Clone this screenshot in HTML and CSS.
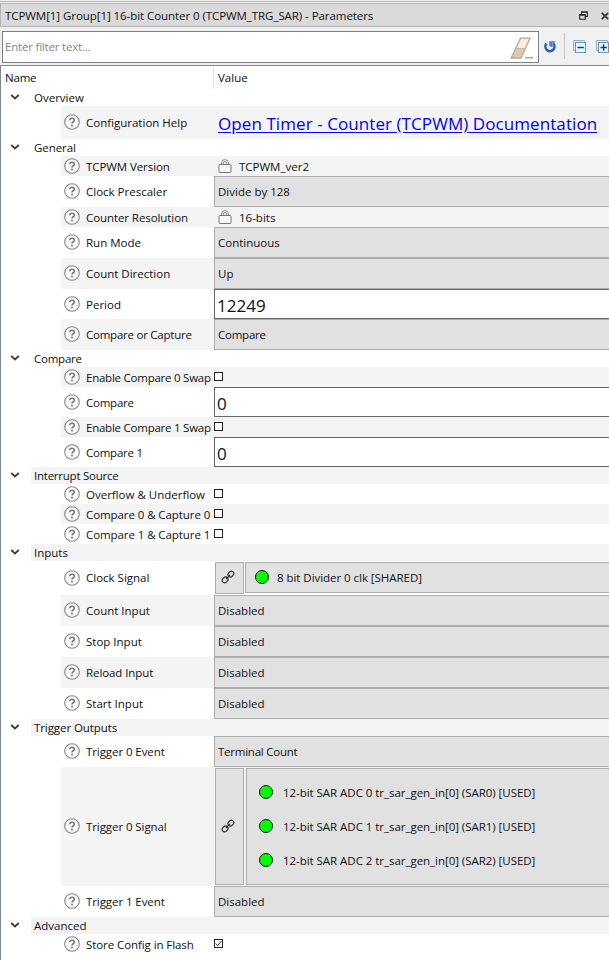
FILE: index.html
```html
<!DOCTYPE html>
<html lang="en">
<head>
<meta charset="utf-8">
<title>Parameters</title>
<link rel="stylesheet" href="styles.css">
</head>
<body>
<svg class="defs" aria-hidden="true">
  <symbol id="help" viewBox="0 0 16 16"><circle cx="8" cy="8" r="7.3" fill="#fff" fill-opacity=".6" stroke="#858585" stroke-width="1.1"/><path d="M5.8 6.2C5.8 3.6 10.3 3.6 10.3 6.2C10.3 7.8 8 7.7 8 9.6" fill="none" stroke="#777" stroke-width="1.6"/><rect x="7.1" y="10.7" width="1.8" height="1.7" fill="#777"/></symbol>
  <symbol id="chev" viewBox="0 0 10 8"><path d="M1.2 2L5 5.5L8.8 2" fill="none" stroke="#404040" stroke-width="1.9"/></symbol>
  <symbol id="lock" viewBox="0 0 14 14"><path d="M3.5 5.5V4A3.5 3.4 0 0 1 10.5 4V5.5M5.3 5.3V4.3A1.7 1.7 0 0 1 8.7 4.3V5.3" fill="none" stroke="#777" stroke-width=".8"/><rect x="1" y="5.5" width="12" height="8" rx=".8" fill="#fafafa" stroke="#666" stroke-width=".9"/></symbol>
  <symbol id="link" viewBox="0 0 14 14"><g fill="none" stroke="#222" stroke-width="1.1" transform="rotate(-45 7 7)"><rect x="-.2" y="4.6" width="6.2" height="4.8" rx="2.4"/><rect x="8" y="4.6" width="6.2" height="4.8" rx="2.4"/><path d="M4 7H10"/></g></symbol>
</svg>
<div class="window">
  <header class="titlebar">
    <span class="title">TCPWM[1] Group[1] 16-bit Counter 0 (TCPWM_TRG_SAR) - Parameters</span>
    <svg class="restore" viewBox="0 0 9 9"><path d="M2.5 3V.7H8.3V5.5H6.5M2.5 1.3H8.3M.7 3.5H6.2V8.3H.7ZM.7 4.1H6.2" fill="none" stroke="#222" stroke-width="1.1"/></svg>
    <svg class="close" viewBox="0 0 8 8"><path d="M.8 .8L7.2 7.2M7.2 .8L.8 7.2" stroke="#333" stroke-width="1.8"/></svg>
  </header>
  <div class="toolbar">
    <div class="filter"><span class="placeholder">Enter filter text...</span>
      <svg class="eraser" viewBox="0 0 23 22"><path d="M10.5 1.2H20L11 21H1.2Z" fill="#f4eee6" stroke="#b5a68f" stroke-width="1.3"/><path d="M6 11.5H14.8L11 20.7H1.5Z" fill="#d8cab6" stroke="#b5a68f" stroke-width=".6"/><path d="M15 20.7H23" stroke="#b5a68f" stroke-width="1.6"/></svg>
    </div>
    <svg class="reset" viewBox="0 0 12 12"><path d="M2.5 2.7A4.5 4.5 0 1 0 9.2 2.5" fill="none" stroke="#2d5fc4" stroke-width="2.6"/><path d="M5.2 .3H11.5L10.4 1.8H8.6V6L5.3 5.2Z" fill="#4b7bd8"/></svg>
    <span class="divider"></span>
    <svg class="tree-btn collapse" viewBox="0 0 14 14"><path d="M.5 10.5V.5H11.5V2.5H2.5V10.5Z" fill="#cfe8f8" stroke="#8db4cf"/><rect x="2.5" y="2.5" width="10" height="10" fill="#e4f4fe" stroke="#7894ad"/><path d="M4.5 7.5H10.8" stroke="#00457e" stroke-width="1.4"/></svg>
    <svg class="tree-btn" viewBox="0 0 14 14"><path d="M.5 10.5V.5H11.5V2.5H2.5V10.5Z" fill="#cfe8f8" stroke="#8db4cf"/><rect x="2.5" y="2.5" width="10" height="10" fill="#e4f4fe" stroke="#7894ad"/><path d="M4.5 7.5H10.8M7.6 4.3V10.7" stroke="#00457e" stroke-width="1.4"/></svg>
  </div>
  <main class="tree">
    <div class="head"><span class="head-name">Name</span><span class="head-value">Value</span></div>

    <div class="group"><svg class="chev"><use href="#chev"/></svg><span class="group-label">Overview</span></div>
    <div class="row link-row alt"><div class="name"><svg class="help"><use href="#help"/></svg><span>Configuration Help</span></div><div class="value"><a class="doc" href="#"><span>Open Timer - Counter (TCPWM) Documentation</span></a></div></div>

    <div class="group"><svg class="chev"><use href="#chev"/></svg><span class="group-label tight">General</span></div>
    <div class="row short alt"><div class="name tight"><svg class="help"><use href="#help"/></svg><span>TCPWM Version</span></div><div class="value"><svg class="lock"><use href="#lock"/></svg><span>TCPWM_ver2</span></div></div>
    <div class="row"><div class="name"><svg class="help"><use href="#help"/></svg><span>Clock Prescaler</span></div><div class="value combo">Divide by 128</div></div>
    <div class="row short alt"><div class="name tight"><svg class="help"><use href="#help"/></svg><span>Counter Resolution</span></div><div class="value"><svg class="lock"><use href="#lock"/></svg><span>16-bits</span></div></div>
    <div class="row"><div class="name"><svg class="help"><use href="#help"/></svg><span>Run Mode</span></div><div class="value combo">Continuous</div></div>
    <div class="row alt"><div class="name"><svg class="help"><use href="#help"/></svg><span>Count Direction</span></div><div class="value combo">Up</div></div>
    <div class="row edit"><div class="name"><svg class="help"><use href="#help"/></svg><span>Period</span></div><div class="value field">12249</div></div>
    <div class="row alt"><div class="name tighter"><svg class="help"><use href="#help"/></svg><span>Compare or Capture</span></div><div class="value combo tighter">Compare</div></div>

    <div class="group"><svg class="chev"><use href="#chev"/></svg><span class="group-label tighter">Compare</span></div>
    <div class="row short alt"><div class="name tighter"><svg class="help"><use href="#help"/></svg><span>Enable Compare 0 Swap</span></div><div class="value"><i class="check"></i></div></div>
    <div class="row edit"><div class="name tighter"><svg class="help"><use href="#help"/></svg><span>Compare</span></div><div class="value field">0</div></div>
    <div class="row short alt"><div class="name tighter"><svg class="help"><use href="#help"/></svg><span>Enable Compare 1 Swap</span></div><div class="value"><i class="check"></i></div></div>
    <div class="row edit"><div class="name tighter"><svg class="help"><use href="#help"/></svg><span>Compare 1</span></div><div class="value field">0</div></div>

    <div class="group alt"><svg class="chev"><use href="#chev"/></svg><span class="group-label tighter">Interrupt Source</span></div>
    <div class="row short"><div class="name"><svg class="help"><use href="#help"/></svg><span>Overflow &amp; Underflow</span></div><div class="value"><i class="check"></i></div></div>
    <div class="row short alt"><div class="name tight"><svg class="help"><use href="#help"/></svg><span>Compare 0 &amp; Capture 0</span></div><div class="value"><i class="check"></i></div></div>
    <div class="row short"><div class="name tight"><svg class="help"><use href="#help"/></svg><span>Compare 1 &amp; Capture 1</span></div><div class="value"><i class="check"></i></div></div>

    <div class="group alt"><svg class="chev"><use href="#chev"/></svg><span class="group-label">Inputs</span></div>
    <div class="row signal"><div class="name"><svg class="help"><use href="#help"/></svg><span>Clock Signal</span></div><div class="value parts"><span class="link-btn"><svg><use href="#link"/></svg></span><div class="signals"><div class="sig"><i class="dot"></i><span>8 bit Divider 0 clk [SHARED]</span></div></div></div></div>
    <div class="row alt"><div class="name"><svg class="help"><use href="#help"/></svg><span>Count Input</span></div><div class="value combo">Disabled</div></div>
    <div class="row"><div class="name"><svg class="help"><use href="#help"/></svg><span>Stop Input</span></div><div class="value combo">Disabled</div></div>
    <div class="row alt"><div class="name tight"><svg class="help"><use href="#help"/></svg><span>Reload Input</span></div><div class="value combo">Disabled</div></div>
    <div class="row"><div class="name"><svg class="help"><use href="#help"/></svg><span>Start Input</span></div><div class="value combo">Disabled</div></div>

    <div class="group alt"><svg class="chev"><use href="#chev"/></svg><span class="group-label tight">Trigger Outputs</span></div>
    <div class="row"><div class="name tight"><svg class="help"><use href="#help"/></svg><span>Trigger 0 Event</span></div><div class="value combo tighter">Terminal Count</div></div>
    <div class="row multi alt"><div class="name tight"><svg class="help"><use href="#help"/></svg><span>Trigger 0 Signal</span></div><div class="value parts"><span class="link-btn"><svg><use href="#link"/></svg></span><div class="signals"><div class="sig"><i class="dot"></i><span>12-bit SAR ADC 0 tr_sar_gen_in[0] (SAR0) [USED]</span></div><div class="sig"><i class="dot"></i><span>12-bit SAR ADC 1 tr_sar_gen_in[0] (SAR1) [USED]</span></div><div class="sig"><i class="dot"></i><span>12-bit SAR ADC 2 tr_sar_gen_in[0] (SAR2) [USED]</span></div></div></div></div>
    <div class="row"><div class="name tight"><svg class="help"><use href="#help"/></svg><span>Trigger 1 Event</span></div><div class="value combo">Disabled</div></div>

    <div class="group alt"><svg class="chev"><use href="#chev"/></svg><span class="group-label">Advanced</span></div>
    <div class="row short"><div class="name tight"><svg class="help"><use href="#help"/></svg><span>Store Config in Flash</span></div><div class="value"><i class="check"><svg viewBox="0 0 7 7"><path d="M.7 3.5L2.7 5.5L6.5 1" fill="none" stroke="#222" stroke-width="1"/></svg></i></div></div>
  </main>
</div>
</body>
</html>
```
FILE: styles.css
```css
* { box-sizing: border-box; }
body {
  margin: 0;
  background: #f0f0f0;
  color: #111;
  font: 11.5px/16px "Open Sans", "Noto Sans", sans-serif;
  white-space: nowrap;
  overflow: hidden;
}
.defs { display: none; }
svg { display: block; flex: none; }
.window { width: 609px; height: 960px; display: flex; flex-direction: column; overflow: hidden; border-top: 1px solid #f0f0f0; }
.window::before { content: ""; height: 1px; flex: none; background: #b4b4b4; margin-bottom: 1px; }

.tight { letter-spacing: -.08px; }
.tighter { letter-spacing: -.24px; }

.titlebar { height: 24px; flex: none; display: flex; align-items: center; background: #dadada; border: solid #b4b4b4; border-width: 1px 0 1px 1px; padding-left: 4px; }
.title { flex: 1; padding-top: 1px; letter-spacing: -.065px; }
.restore { width: 9px; height: 9px; margin: 0 13px 0 0; }
.close { width: 8px; height: 8px; margin-top: 1px; }

.toolbar { height: 38px; flex: none; display: flex; align-items: center; padding-left: 2px; }
.filter { width: 537px; flex: none; height: 32px; margin-top: 1px; background: #fff; border: 1px solid #7a7f88; display: flex; align-items: center; justify-content: space-between; padding: 0 5px 0 2px; }
.placeholder { color: #858585; letter-spacing: -.2px; }
.eraser { width: 23px; height: 22px; margin-top: 2px; }
.reset { width: 12px; height: 12px; margin: 1px 0 0 5px; }
.divider { width: 1px; height: 26px; flex: none; background: #c5c5c5; margin: 0 8px; }
.tree-btn { width: 14px; height: 14px; margin-top: 2px; }
.collapse { margin-right: 9px; }

.tree { flex: 1; background: #fff; border: solid #82878f; border-width: 1px 0 0 1px; }
.head { height: 23px; display: flex; align-items: center; }
.head-name { width: 213px; height: 23px; line-height: 23px; padding-left: 4px; border-right: 1px solid #e5e5e5; letter-spacing: -.2px; }
.head-value { padding-left: 4px; }

.group { height: 17px; display: flex; align-items: center; padding-left: 9px; }
.chev { width: 10px; height: 8px; margin: 0 11px 2px 0; }
.group-label { flex: 1; height: 17px; line-height: 17px; padding-left: 3px; }
.alt > .group-label { background: #f4f4f4; }

.row { height: 31px; margin-left: 60px; display: flex; }
.row.alt { background: #f4f4f4; }
.row.short { height: 20px; }
.row.edit { height: 30px; }
.row.link-row { height: 33px; }
.row.signal { height: 34px; }
.row.multi { height: 119px; }
.name { width: 153px; flex: none; display: flex; align-items: center; padding-left: 3px; }
.help { width: 16px; height: 16px; margin: 0 6px 1px 0; }
.short span, .edit .name span { padding-top: 1px; }
.value { flex: 1; display: flex; align-items: center; }
.combo { background: #e1e1e1; border: 1px solid #adadad; border-right: 0; padding-left: 3px; }
.field { background: #fff; border: 1px solid #666; border-right: 0; padding: 3px 0 0 2px; font-size: 17px; }
.doc { color: #00f; font-size: 17px; letter-spacing: .075px; padding: 2px 0 0 4px; text-underline-offset: 2px; }
.lock { width: 14px; height: 14px; margin: 0 7px 1px 4px; }
.check { width: 9px; height: 9px; border: 1px solid #222; background: #fff; margin: 0 0 1px; }

.parts { padding: 1px 0 1px 1px; align-items: stretch; }
.link-btn { width: 29px; background: #e1e1e1; border: 1px solid #adadad; display: flex; align-items: center; justify-content: center; padding: 0 3px 2px 0; }
.link-btn svg { width: 14px; height: 14px; }
.signals { flex: 1; margin: 0 0 1px 1px; background: #e1e1e1; border: 1px solid #adadad; border-right: 0; display: flex; flex-direction: column; justify-content: center; padding-left: 9px; letter-spacing: -.04px; }
.sig { display: flex; align-items: center; }
.dot { width: 14px; height: 14px; border: 1px solid #111; border-radius: 50%; background: #0f0; margin: 0 8px 2px 0; }
.multi .signals { margin: 0 0 0 2px; padding-left: 12px; }
.multi .sig { height: 34px; }
.multi .dot { margin-right: 10px; }
```
